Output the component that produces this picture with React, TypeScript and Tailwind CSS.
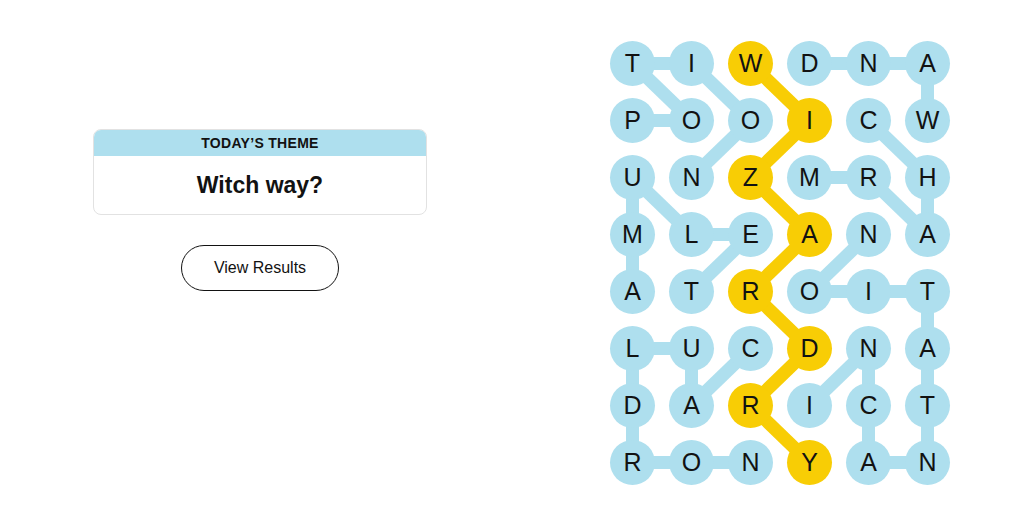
const letters = [
  'TIWDNA',
  'POOICW',
  'UNZMRH',
  'MLEANA',
  'ATROIT',
  'LUCDNA',
  'DARICT',
  'RONYAN',
]

type Cell = [number, number]

// found words, each as a path of [row, col] cells
const words: { path: Cell[]; spangram?: boolean }[] = [
  { path: [[1, 0], [1, 1], [0, 0], [0, 1], [1, 2], [2, 1]] },
  { path: [[1, 5], [0, 5], [0, 4], [0, 3]] },
  { path: [[1, 4], [2, 5], [3, 5], [2, 4], [2, 3]] },
  { path: [[4, 0], [3, 0], [2, 0], [3, 1], [3, 2], [4, 1]] },
  {
    path: [
      [6, 3], [5, 4], [6, 4], [7, 4], [7, 5], [6, 5],
      [5, 5], [4, 5], [4, 4], [4, 3], [3, 4],
    ],
  },
  { path: [[5, 2], [6, 1], [5, 1], [5, 0], [6, 0], [7, 0], [7, 1], [7, 2]] },
  {
    path: [[0, 2], [1, 3], [2, 2], [3, 3], [4, 2], [5, 3], [6, 2], [7, 3]],
    spangram: true,
  },
]

const BLUE = '#aedfee'
const YELLOW = '#f8cd05'
const SIZE = 45
const COL_STEP = 59
const ROW_STEP = 57

const cx = (c: number) => SIZE / 2 + c * COL_STEP
const cy = (r: number) => SIZE / 2 + r * ROW_STEP

const spanCells = new Set(
  words.filter((w) => w.spangram).flatMap((w) => w.path.map(([r, c]) => `${r}-${c}`))
)

function Board() {
  return (
    <div className="relative w-[340px] h-[444px]">
      <svg className="absolute inset-0" width={340} height={444}>
        {words.map((w, i) =>
          w.path.slice(1).map(([r, c], j) => {
            const [pr, pc] = w.path[j]
            return (
              <line
                key={`${i}-${j}`}
                x1={cx(pc)}
                y1={cy(pr)}
                x2={cx(c)}
                y2={cy(r)}
                stroke={w.spangram ? YELLOW : BLUE}
                strokeWidth={13}
              />
            )
          })
        )}
      </svg>
      <div className="relative grid grid-cols-6 gap-x-[14px] gap-y-[12px]">
        {letters.map((row, r) =>
          row.split('').map((ch, c) => (
            <div
              key={`${r}-${c}`}
              className={`w-[45px] h-[45px] rounded-full flex items-center justify-center text-[25px] text-[#121212] font-['Liberation_Sans',sans-serif] ${
                spanCells.has(`${r}-${c}`) ? 'bg-[#f8cd05]' : 'bg-[#aedfee]'
              }`}
            >
              {ch}
            </div>
          ))
        )}
      </div>
    </div>
  )
}

export default function App() {
  return (
    <div className="w-[1024px] h-[527px] bg-white flex font-['Liberation_Sans',sans-serif] text-[#121212]">
      <div className="w-[520px] flex flex-col items-center pt-[129px]">
        <div className="w-[334px] rounded-lg border border-[#e2e2e2] overflow-hidden">
          <div className="h-[26px] bg-[#aedfee] flex items-center justify-center text-[14px] font-bold tracking-[0.3px]">
            TODAY’S THEME
          </div>
          <div className="h-[58px] flex items-center justify-center text-[23px] font-bold">
            Witch way?
          </div>
        </div>
        <button className="mt-[30px] w-[158px] h-[46px] rounded-full border border-[#121212] text-[16px]">
          View Results
        </button>
      </div>
      <div className="pl-[90px] pt-[41px]">
        <Board />
      </div>
    </div>
  )
}
